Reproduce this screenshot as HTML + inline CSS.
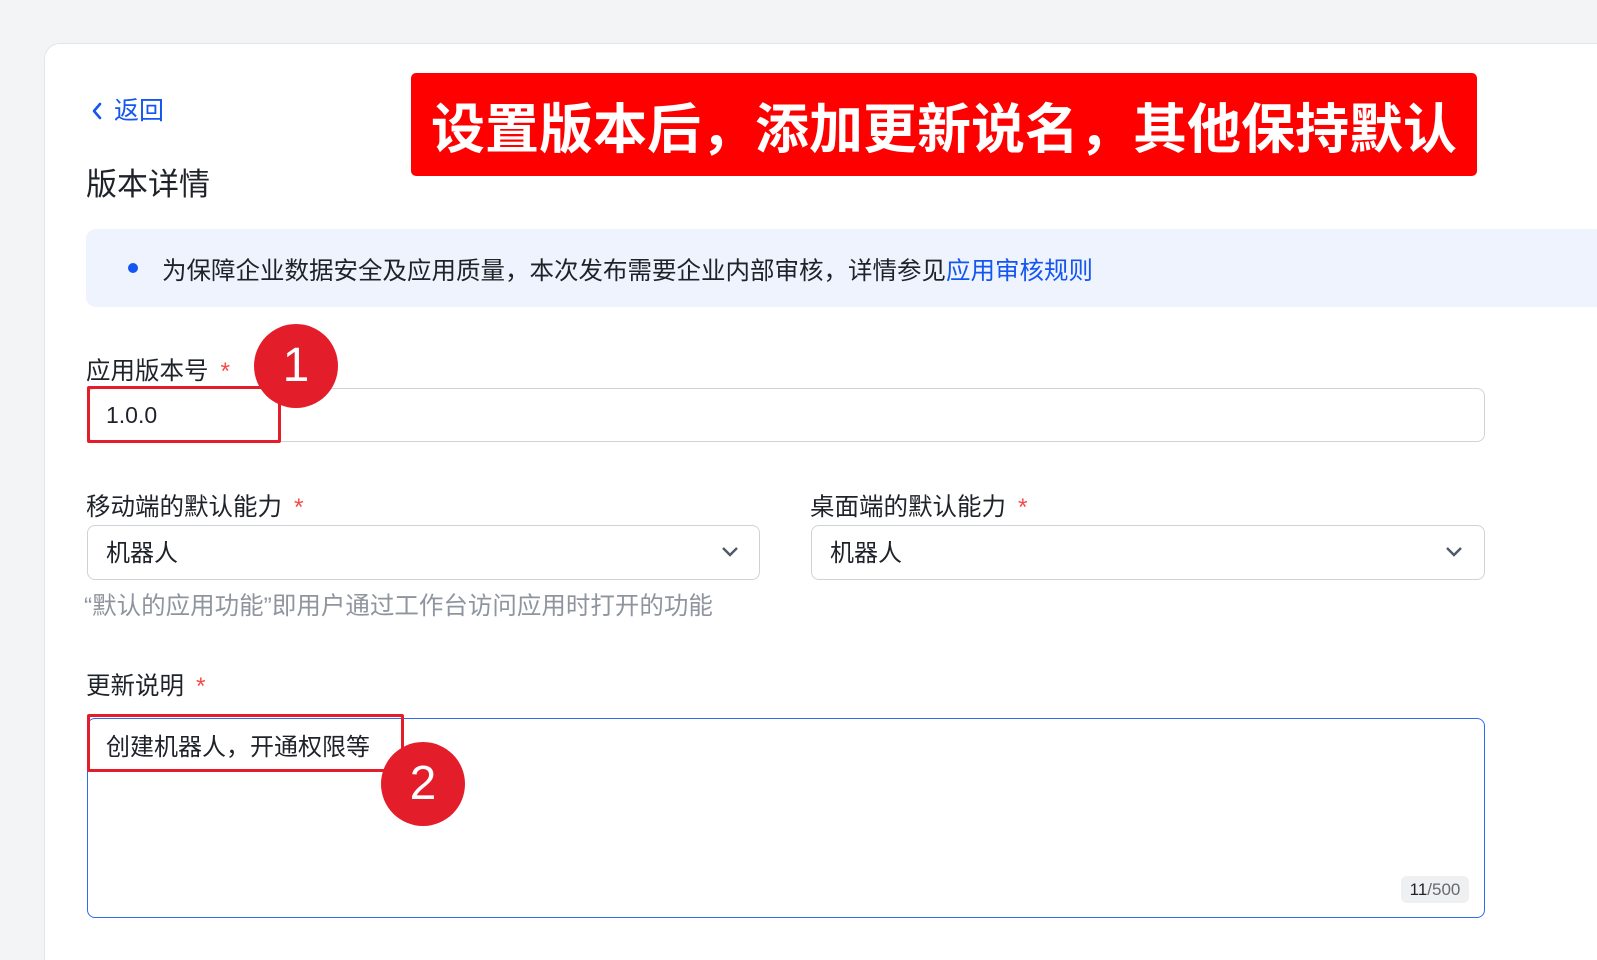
<!DOCTYPE html>
<html style="overflow:hidden;height:960px"><head><meta charset="utf-8"><style>
*{margin:0;padding:0;box-sizing:border-box}
body{width:1597px;height:960px;background:#f3f4f6;font-family:"Liberation Sans","Noto Sans CJK SC",sans-serif;color:#1f2329;position:relative;overflow:hidden}
.card{position:absolute;left:44px;top:43px;width:1553px;height:917px;background:#fff;border:1px solid #e3e5e8;border-right:none;border-bottom:none;border-radius:16px 0 0 0}
.a{position:absolute;white-space:nowrap}
.box{position:absolute;border:1px solid #d0d3d6;border-radius:8px;background:#fff}
.lab{font-size:24.5px;color:#1f2329;line-height:30px}
.star{color:#f54a45;margin-left:12px}
.hl{position:absolute;border:3px solid #e31e2a;border-radius:2px}
.circ{position:absolute;width:84px;height:84px;border-radius:50%;background:#e31e2a;color:#fff;font-size:48px;text-align:center;line-height:84px}
</style></head><body>
<div class="card"></div>
<div class="a" style="left:90px;top:96px;font-size:25px;line-height:30px;color:#1456f0"><svg width="14" height="20" viewBox="0 0 14 20" style="vertical-align:-2px;margin-right:10px"><path d="M10 3 L4 10 L10 17" fill="none" stroke="#1456f0" stroke-width="2.6" stroke-linecap="round" stroke-linejoin="round"/></svg>返回</div>
<div class="a" style="left:411px;top:73px;width:1066px;height:103px;background:#fe0000;border-radius:5px;color:#fff;font-weight:bold;font-size:54px;text-align:center;line-height:103px;font-family:'Noto Sans CJK SC',sans-serif">设置版本后，添加更新说名，其他保持默认</div>
<div class="a" style="left:86px;top:167px;font-size:31px;line-height:36px">版本详情</div>
<div class="a" style="left:86px;top:229px;width:1520px;height:78px;background:#eef3fd;border-radius:10px"></div>
<div class="a" style="left:128px;top:263px;width:10px;height:10px;border-radius:50%;background:#1456f0"></div>
<div class="a" style="left:162px;top:257px;font-size:24.5px;line-height:30px">为保障企业数据安全及应用质量，本次发布需要企业内部审核，详情参见<span style="color:#1456f0">应用审核规则</span></div>
<div class="a lab" style="left:86px;top:357px">应用版本号<span class="star">*</span></div>
<div class="box" style="left:87px;top:388px;width:1398px;height:54px"></div>
<div class="a" style="left:106px;top:401px;font-size:23px;line-height:28px">1.0.0</div>
<div class="hl" style="left:87px;top:386px;width:194px;height:57px"></div>
<div class="circ" style="left:254px;top:324px">1</div>
<div class="a lab" style="left:86px;top:493px">移动端的默认能力<span class="star">*</span></div>
<div class="a lab" style="left:810px;top:493px">桌面端的默认能力<span class="star">*</span></div>
<div class="box" style="left:87px;top:525px;width:673px;height:55px"></div>
<div class="box" style="left:811px;top:525px;width:674px;height:55px"></div>
<div class="a" style="left:106px;top:540px;font-size:24px;line-height:28px">机器人</div>
<div class="a" style="left:830px;top:540px;font-size:24px;line-height:28px">机器人</div>
<svg class="a" style="left:720px;top:543px" width="20" height="16" viewBox="0 0 20 16"><path d="M3 5 L10 12 L17 5" fill="none" stroke="#4e5969" stroke-width="2.4"/></svg>
<svg class="a" style="left:1444px;top:543px" width="20" height="16" viewBox="0 0 20 16"><path d="M3 5 L10 12 L17 5" fill="none" stroke="#4e5969" stroke-width="2.4"/></svg>
<div class="a" style="left:84px;top:592px;font-size:24.5px;line-height:30px;color:#8f959e">“默认的应用功能”即用户通过工作台访问应用时打开的功能</div>
<div class="a lab" style="left:86px;top:672px">更新说明<span class="star">*</span></div>
<div class="box" style="left:87px;top:718px;width:1398px;height:200px;border-color:#2f6bf0"></div>
<div class="a" style="left:106px;top:734px;font-size:24px;line-height:28px">创建机器人，开通权限等</div>
<div class="a" style="left:1401px;top:876px;width:68px;height:27px;background:#eff0f1;border-radius:6px;font-size:17px;line-height:27px;text-align:center;color:#646a73"><span style="color:#1f2329">11</span>/500</div>
<div class="hl" style="left:87px;top:714px;width:317px;height:58px"></div>
<div class="circ" style="left:381px;top:742px">2</div>
</body></html>
